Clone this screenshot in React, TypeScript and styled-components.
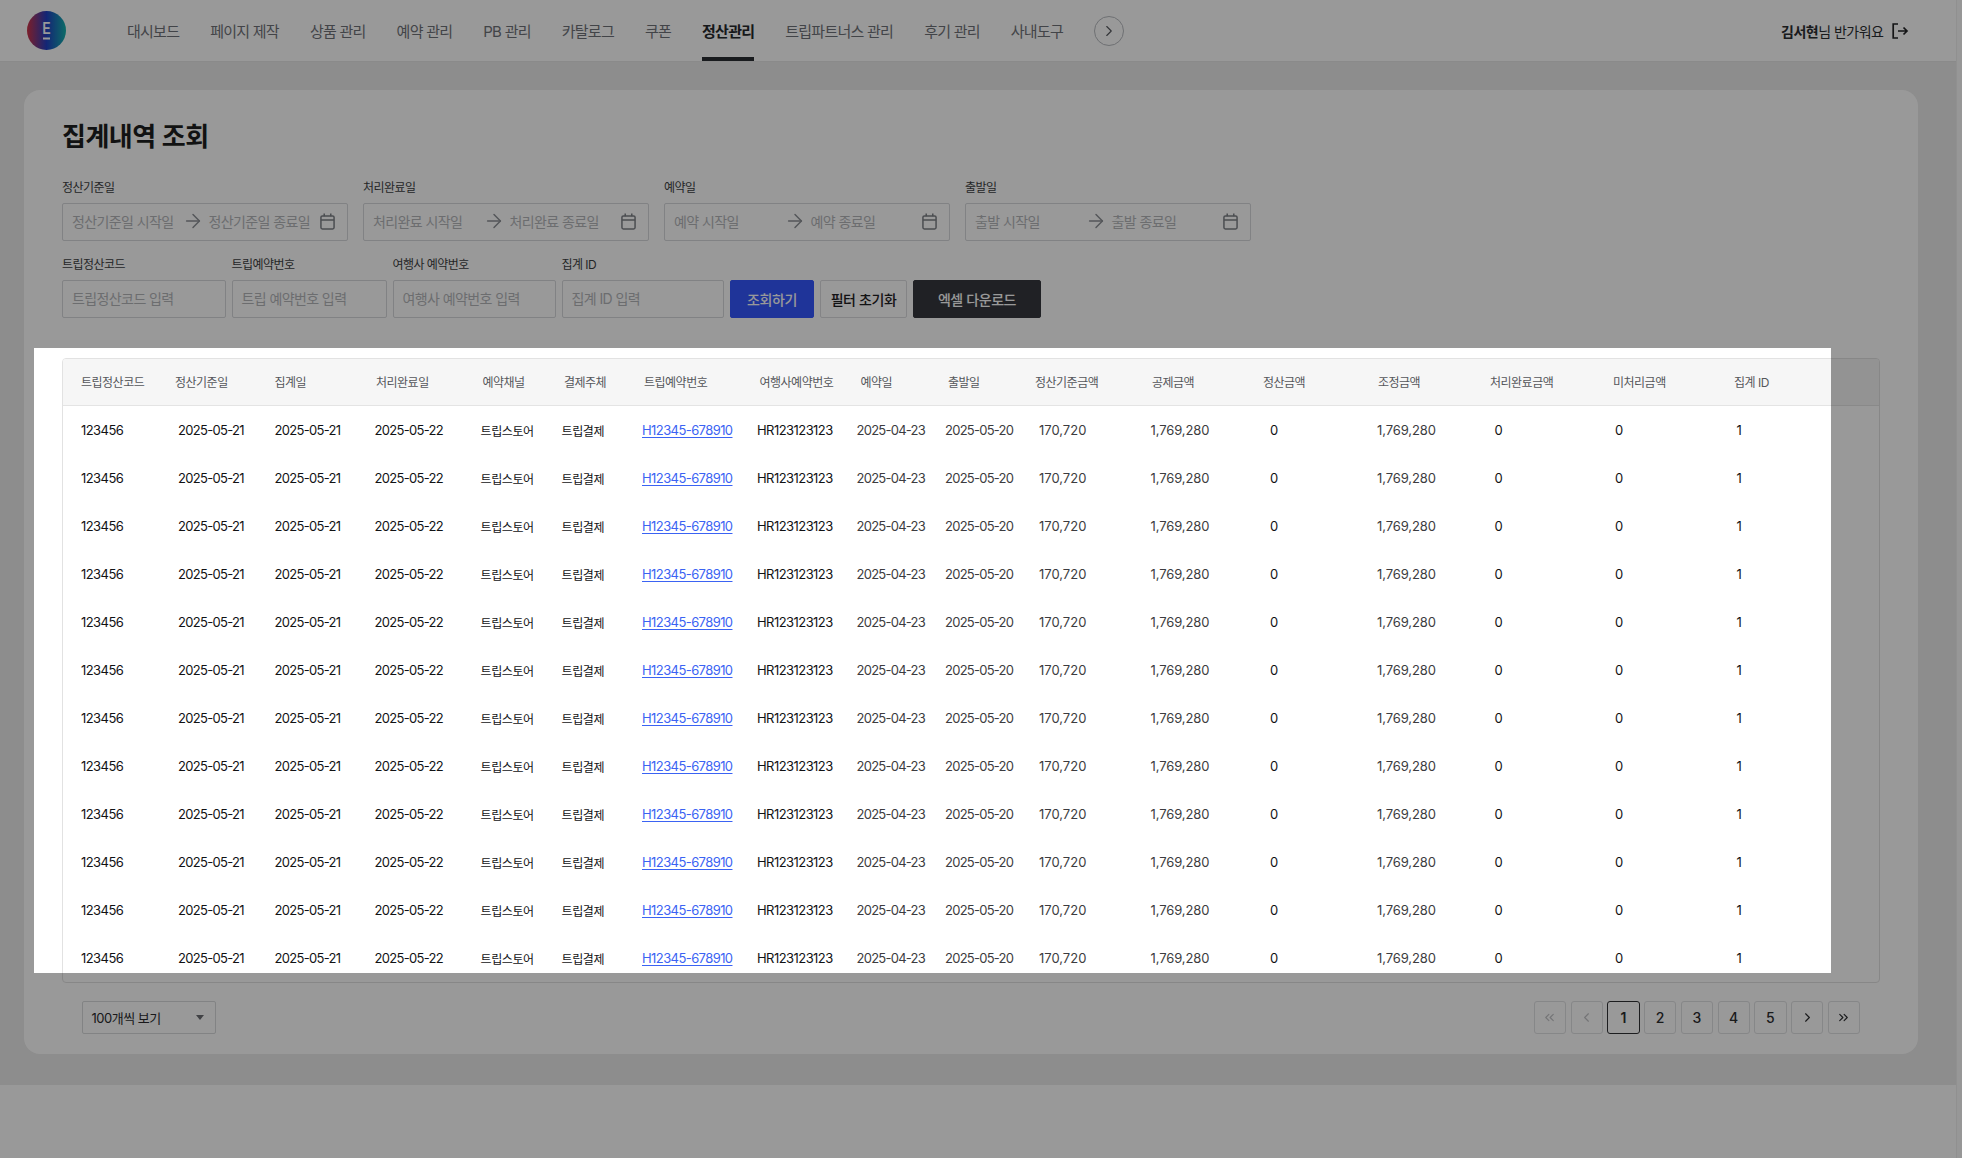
import React from "react";
import styled, { createGlobalStyle } from "styled-components";
import { ArrowRight, ChevronLeft, ChevronRight, ChevronsLeft, ChevronsRight } from "lucide-react";

const Global = createGlobalStyle`
  * { box-sizing: border-box; }
  html, body { margin: 0; height: 100%; overflow: hidden; background: #fff; }
  body {
    font-family: Inter, "Noto Sans CJK KR", sans-serif;
    color: #1c1c1e;
  }
`;

const Shell = styled.div`
  display: flex;
  width: 1962px;
  height: 1158px;
  overflow: hidden;
`;
const Column = styled.div`
  display: flex;
  flex-direction: column;
  width: 1956px;
  height: 100%;
`;
const ScrollTrack = styled.div`
  width: 6px;
  background: #fcfcfc;
  border-left: 1px solid #f0f0f0;
`;

/* top bar */
const Nav = styled.header`
  display: flex;
  align-items: center;
  flex-shrink: 0;
  height: 62px;
  padding: 0 47px 0 27px;
  background: #fff;
  border-bottom: 1px solid #e6e6e6;
`;
const Logo = styled.svg`
  flex-shrink: 0;
  width: 39px;
  height: 39px;
  margin-right: 61px;
`;
const Menu = styled.nav`
  display: flex;
  align-items: center;
  gap: 31px;
  height: 100%;
`;
const MenuItem = styled.a<{ $active?: boolean }>`
  display: flex;
  align-items: center;
  height: 100%;
  font-size: 15px;
  letter-spacing: -0.75px;
  white-space: nowrap;
  color: ${p => (p.$active ? "#26282c" : "#6f7278")};
  font-weight: ${p => (p.$active ? 600 : 400)};
  border-bottom: 4px solid ${p => (p.$active ? "#2b2d33" : "transparent")};
  padding-top: 4px;
`;
const MoreButton = styled.button`
  display: flex;
  align-items: center;
  justify-content: center;
  width: 30px;
  height: 30px;
  padding: 0;
  color: #55585e;
  background: transparent;
  border: 1px solid #b8bbc0;
  border-radius: 50%;
`;
const User = styled.div`
  display: flex;
  align-items: center;
  margin-left: auto;
  font-size: 14px;
  letter-spacing: -0.5px;
  color: #2b2d31;
  b { font-weight: 600; }
`;
const LogoutIcon = styled.svg`
  width: 18px;
  height: 18px;
  margin-left: 7.5px;
`;

/* content */
const Main = styled.main`
  flex: 1;
  padding: 28px 38px 31px 24px;
  background: #ebebeb;
`;
const Card = styled.section`
  display: flex;
  flex-direction: column;
  height: 964px;
  padding: 29px 38px 0;
  background: #fff;
  border-radius: 16px;
`;
const Title = styled.h1`
  margin: 0 0 26px;
  font-size: 26px;
  line-height: 36px;
  font-weight: 600;
  letter-spacing: -0.5px;
  color: #1d1e20;
`;
const FilterRow = styled.div`
  display: flex;
  gap: 15px;
`;
const FilterRowTight = styled.div`
  display: flex;
  align-items: flex-end;
  gap: 6px;
  margin-top: 17px;
  margin-bottom: 40px;
`;
const Field = styled.label<{ $width: number }>`
  display: flex;
  flex-direction: column;
  gap: 8px;
  width: ${p => p.$width}px;
`;
const Label = styled.span`
  font-size: 12px;
  line-height: 14px;
  letter-spacing: -0.55px;
  color: #3d3f43;
`;
const InputBox = styled.div`
  display: flex;
  align-items: center;
  height: 38px;
  padding: 0 10px 1.5px 9px;
  font-size: 14px;
  letter-spacing: -0.6px;
  white-space: nowrap;
  color: #b4b6ba;
  background: #fff;
  border: 1px solid #d8d9dc;
  border-radius: 2px;
`;
const StartText = styled.span`
  width: 114.5px;
`;
const EndText = styled.span`
  flex: 1;
`;
const Arrow = styled(ArrowRight)`
  flex-shrink: 0;
  width: 22px;
  height: 22px;
  margin: 0 4.5px 0 -4.5px;
  color: #8d9096;
`;
const CalendarIcon = styled.svg`
  flex-shrink: 0;
  width: 15px;
  height: 17px;
  margin-right: 2px;
`;
const ActionButton = styled.button<{ $kind: "primary" | "ghost" | "dark"; $width: number }>`
  width: ${p => p.$width}px;
  height: 38px;
  padding: 0;
  font-family: inherit;
  font-size: 14px;
  font-weight: 500;
  letter-spacing: -0.4px;
  border-radius: 2px;
  color: ${p => (p.$kind === "ghost" ? "#1f2023" : "#fff")};
  background: ${p => (p.$kind === "primary" ? "#3558ff" : p.$kind === "dark" ? "#36383e" : "#fff")};
  border: 1px solid ${p => (p.$kind === "primary" ? "#3558ff" : p.$kind === "dark" ? "#36383e" : "#dcdde0")};
`;

/* table */
const TableWrap = styled.div`
  width: 100%;
  height: 625px;
  overflow: hidden;
  background: #fff;
  border: 1px solid #e2e2e2;
  border-radius: 4px;
`;
const HeadRow = styled.div<{ $grid: string }>`
  display: grid;
  grid-template-columns: ${p => p.$grid};
  align-items: center;
  height: 47px;
  padding-bottom: 2px;
  background: #f6f6f6;
  border-bottom: 1px solid #e4e4e4;
`;
const BodyRow = styled.div<{ $grid: string }>`
  display: grid;
  grid-template-columns: ${p => p.$grid};
  align-items: center;
  height: 48px;
`;
const HeadCell = styled.div<{ $inset: number }>`
  padding-left: ${p => p.$inset}px;
  font-size: 12px;
  letter-spacing: -0.5px;
  white-space: nowrap;
  color: #55575b;
`;
const Cell = styled.div<{ $inset: number; $muted?: boolean; $tracking: number }>`
  padding-left: ${p => p.$inset}px;
  font-size: 13px;
  letter-spacing: ${p => p.$tracking}px;
  white-space: nowrap;
  color: ${p => (p.$muted ? "#3c3c40" : "#111214")};
`;
const HangulCell = styled(Cell)`
  font-size: 12px;
`;
const TripLink = styled.a`
  color: #3b63f3;
  text-decoration: underline;
  text-underline-offset: 2px;
`;

/* footer of the card */
const Pager = styled.div`
  display: flex;
  align-items: center;
  justify-content: space-between;
  margin-top: 18px;
  padding: 0 20px 0 19.5px;
`;
const PageSize = styled.div`
  display: flex;
  align-items: center;
  justify-content: space-between;
  width: 134px;
  height: 33px;
  padding: 0 11px 0 9px;
  font-size: 13px;
  letter-spacing: -0.5px;
  color: #2a2b2e;
  border: 1px solid #d9dadc;
  border-radius: 2px;
`;
const Caret = styled.i`
  width: 0;
  height: 0;
  border-left: 4px solid transparent;
  border-right: 4px solid transparent;
  border-top: 5px solid #6d6f73;
`;
const PageList = styled.div`
  display: flex;
  gap: 4.5px;
`;
const PageButton = styled.button<{ $active?: boolean; $disabled?: boolean }>`
  display: flex;
  align-items: center;
  justify-content: center;
  width: 32.25px;
  height: 33px;
  padding: 0;
  font-family: inherit;
  font-size: 14px;
  font-weight: ${p => (p.$active ? 600 : 500)};
  color: ${p => (p.$disabled ? "#c2c3c6" : "#2c2d30")};
  background: #fff;
  border: 1px solid ${p => (p.$active ? "#303134" : "#e0e1e3")};
  border-radius: 3px;
  svg { width: 15px; height: 15px; }
`;
const PageFoot = styled.footer`
  flex-shrink: 0;
  height: 73px;
  background: #fff;
`;

/* dimmed layer with a window over the table */
const Spotlight = styled.div`
  position: fixed;
  left: 34px;
  top: 348px;
  width: 1797px;
  height: 625px;
  pointer-events: none;
  box-shadow: 0 0 0 3000px rgba(0, 0, 0, 0.4);
`;

const menu = ["대시보드", "페이지 제작", "상품 관리", "예약 관리", "PB 관리", "카탈로그", "쿠폰", "정산관리", "트립파트너스 관리", "후기 관리", "사내도구"];

type Col = { label: string; value: string; head: number; cell: number; track: number; kind?: "hangul" | "link" | "muted" };

// x of header text and of cell text, in page pixels
const cols: Col[] = [
  { label: "트립정산코드", value: "123456", head: 81, cell: 81, track: -0.55 },
  { label: "정산기준일", value: "2025-05-21", head: 175, cell: 178, track: -0.7 },
  { label: "집계일", value: "2025-05-21", head: 274.5, cell: 274.5, track: -0.7 },
  { label: "처리완료일", value: "2025-05-22", head: 376, cell: 374.5, track: -0.7 },
  { label: "예약채널", value: "트립스토어", head: 482.5, cell: 480.5, track: -0.4, kind: "hangul" },
  { label: "결제주체", value: "트립결제", head: 564, cell: 561.5, track: -0.4, kind: "hangul" },
  { label: "트립예약번호", value: "H12345-678910", head: 644, cell: 642, track: -0.58, kind: "link" },
  { label: "여행사예약번호", value: "HR123123123", head: 759.5, cell: 757, track: -0.55 },
  { label: "예약일", value: "2025-04-23", head: 860.5, cell: 856.5, track: -0.75, kind: "muted" },
  { label: "출발일", value: "2025-05-20", head: 948, cell: 945, track: -0.75, kind: "muted" },
  { label: "정산기준금액", value: "170,720", head: 1035, cell: 1039, track: 0, kind: "muted" },
  { label: "공제금액", value: "1,769,280", head: 1152, cell: 1150.5, track: -0.1, kind: "muted" },
  { label: "정산금액", value: "0", head: 1263, cell: 1270, track: 0 },
  { label: "조정금액", value: "1,769,280", head: 1378, cell: 1377, track: -0.1, kind: "muted" },
  { label: "처리완료금액", value: "0", head: 1490, cell: 1494.5, track: 0 },
  { label: "미처리금액", value: "0", head: 1613, cell: 1615, track: 0 },
  { label: "집계 ID", value: "1", head: 1734, cell: 1736.5, track: 0 },
];

const TABLE_LEFT = 63;
const TABLE_RIGHT = 1880;
const starts = cols.map(c => Math.min(c.head, c.cell));
starts[0] = TABLE_LEFT;
const grid = starts.map((s, i) => `${(starts[i + 1] ?? TABLE_RIGHT) - s}px`).join(" ");

const Calendar = () => (
  <CalendarIcon viewBox="0 0 16 18" fill="none" stroke="#7e8187" strokeWidth="1.6">
    <rect x="1" y="3" width="14" height="14" rx="1.5" />
    <path d="M1 7.5h14M4.5 0.5v3M11.5 0.5v3" />
  </CalendarIcon>
);

const DateField = ({ label, from, to }: { label: string; from: string; to: string }) => (
  <Field $width={286}>
    <Label>{label}</Label>
    <InputBox>
      <StartText>{from}</StartText>
      <Arrow strokeWidth={1.6} />
      <EndText>{to}</EndText>
      <Calendar />
    </InputBox>
  </Field>
);

const TextField = ({ label, hint, width }: { label: string; hint: string; width: number }) => (
  <Field $width={width}>
    <Label>{label}</Label>
    <InputBox>{hint}</InputBox>
  </Field>
);

export default function App() {
  return (
    <>
      <Global />
      <Shell>
        <Column>
          <Nav>
            <Logo viewBox="0 0 39 39">
              <defs>
                <linearGradient id="logoFill" x1="0" x2="1" y1="0" y2="0">
                  <stop offset="0" stopColor="#cf3345" />
                  <stop offset="0.5" stopColor="#2140c4" />
                  <stop offset="1" stopColor="#14b3ac" />
                </linearGradient>
              </defs>
              <circle cx="19.5" cy="19.5" r="19.5" fill="url(#logoFill)" />
              <text x="15.5" y="23" fontFamily="Liberation Sans, sans-serif" fontWeight="700" fontSize="16" fill="#fff" textLength="8" lengthAdjust="spacingAndGlyphs">E</text>
              <rect x="16" y="26.5" width="7" height="2" fill="#fff" />
            </Logo>
            <Menu>
              {menu.map(m => (
                <MenuItem key={m} $active={m === "정산관리"}>{m}</MenuItem>
              ))}
              <MoreButton><ChevronRight size={18} strokeWidth={1.5} /></MoreButton>
            </Menu>
            <User>
              <b>김서현</b>님 반가워요
              <LogoutIcon viewBox="0 0 18 18" fill="none" stroke="#222326" strokeWidth="1.7">
                <path d="M7 2H2.2v14H7" />
                <path d="M7 9h9M12.5 5.5L16 9l-3.5 3.5" />
              </LogoutIcon>
            </User>
          </Nav>
          <Main>
            <Card>
              <Title>집계내역 조회</Title>
              <FilterRow>
                <DateField label="정산기준일" from="정산기준일 시작일" to="정산기준일 종료일" />
                <DateField label="처리완료일" from="처리완료 시작일" to="처리완료 종료일" />
                <DateField label="예약일" from="예약 시작일" to="예약 종료일" />
                <DateField label="출발일" from="출발 시작일" to="출발 종료일" />
              </FilterRow>
              <FilterRowTight>
                <TextField label="트립정산코드" hint="트립정산코드 입력" width={163.5} />
                <TextField label="트립예약번호" hint="트립 예약번호 입력" width={155} />
                <TextField label="여행사 예약번호" hint="여행사 예약번호 입력" width={163} />
                <TextField label="집계 ID" hint="집계 ID 입력" width={162.5} />
                <ActionButton $kind="primary" $width={84}>조회하기</ActionButton>
                <ActionButton $kind="ghost" $width={87}>필터 초기화</ActionButton>
                <ActionButton $kind="dark" $width={128}>엑셀 다운로드</ActionButton>
              </FilterRowTight>
              <TableWrap>
                <HeadRow $grid={grid}>
                  {cols.map((c, i) => (
                    <HeadCell key={c.label} $inset={c.head - (i === 0 ? TABLE_LEFT : starts[i])}>{c.label}</HeadCell>
                  ))}
                </HeadRow>
                {Array.from({ length: 12 }, (_, r) => (
                  <BodyRow key={r} $grid={grid}>
                    {cols.map((c, i) => {
                      const inset = c.cell - (i === 0 ? TABLE_LEFT : starts[i]);
                      if (c.kind === "hangul") return <HangulCell key={c.label} $inset={inset} $tracking={c.track}>{c.value}</HangulCell>;
                      if (c.kind === "link") return <Cell key={c.label} $inset={inset} $tracking={c.track}><TripLink>{c.value}</TripLink></Cell>;
                      return <Cell key={c.label} $inset={inset} $tracking={c.track} $muted={c.kind === "muted"}>{c.value}</Cell>;
                    })}
                  </BodyRow>
                ))}
              </TableWrap>
              <Pager>
                <PageSize>100개씩 보기<Caret /></PageSize>
                <PageList>
                  <PageButton $disabled><ChevronsLeft strokeWidth={1.8} /></PageButton>
                  <PageButton $disabled><ChevronLeft strokeWidth={1.8} /></PageButton>
                  <PageButton $active>1</PageButton>
                  <PageButton>2</PageButton>
                  <PageButton>3</PageButton>
                  <PageButton>4</PageButton>
                  <PageButton>5</PageButton>
                  <PageButton><ChevronRight strokeWidth={1.8} /></PageButton>
                  <PageButton><ChevronsRight strokeWidth={1.8} /></PageButton>
                </PageList>
              </Pager>
            </Card>
          </Main>
          <PageFoot />
        </Column>
        <ScrollTrack />
      </Shell>
      <Spotlight />
    </>
  );
}
